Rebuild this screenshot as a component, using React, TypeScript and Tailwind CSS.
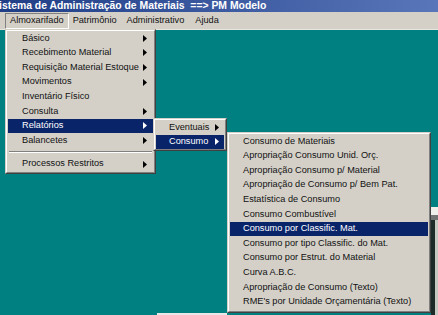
import React from "react";

const FONT = { fontFamily: '"Liberation Sans", Arial, sans-serif' };

function Arrow({ white }: { white?: boolean }) {
  return (
    <svg width="4" height="7" viewBox="0 0 4 7" className="shrink-0">
      <path d="M0 0 L4 3.5 L0 7 Z" fill={white ? "#ffffff" : "#000000"} />
    </svg>
  );
}

type Item = { label: string; sub?: boolean; active?: boolean; sep?: boolean };

function Menu({
  items,
  className,
  textPad,
  arrowPad,
}: {
  items: Item[];
  className: string;
  textPad: string;
  arrowPad: string;
}) {
  return (
    <div
      className={
        "absolute border border-t-[#d4d0c8] border-l-[#d4d0c8] border-b-[#404040] border-r-[#404040] bg-[#d4d0c8] " +
        className
      }
    >
      <div className="border border-t-white border-l-white border-b-[#808080] border-r-[#808080] px-[1px] py-0 h-full flex flex-col">
        {items.map((it, i) =>
          it.sep ? (
            <div key={i} className="h-[9px] flex flex-col justify-center px-[1px]">
              <div className="h-[1px] bg-[#808080]" />
              <div className="h-[1px] bg-white" />
            </div>
          ) : (
            <div
              key={i}
              className={
                "h-[14.6px] flex items-center text-[9.2px] leading-none " +
                (it.active ? "bg-[#0a246a] text-white" : "text-[#111111]")
              }
            >
              <span className={"flex-1 whitespace-nowrap " + textPad}>{it.label}</span>
              {it.sub && (
                <span className={arrowPad + " flex items-center"}>
                  <Arrow white={it.active} />
                </span>
              )}
            </div>
          )
        )}
      </div>
    </div>
  );
}

export default function App() {
  return (
    <div className="relative w-[438px] h-[315px] overflow-hidden flex flex-col bg-[#008080]" style={FONT}>
      {/* Title bar */}
      <div className="h-[12px] shrink-0 flex items-center bg-gradient-to-r from-[#1f3e86] to-[#5a76ba] text-white font-bold text-[10.4px] leading-none whitespace-nowrap">
        <span className="-ml-[1px]">istema de Administração de Materiais&nbsp;&nbsp;==&gt; PM Modelo</span>
      </div>
      {/* Menu bar */}
      <div className="h-[18px] shrink-0 flex items-stretch bg-[#d4d0c8] border-b border-b-[#e8e6e0] pl-[5px] pt-[1px] text-[9.2px] leading-none text-[#111111]">
        <div className="flex items-center px-[4px] border border-t-[#808080] border-l-[#808080] border-b-white border-r-white">
          Almoxarifado
        </div>
        <div className="flex items-center px-[4px]">Patrimônio</div>
        <div className="flex items-center pl-[6px] pr-[6px]">Administrativo</div>
        <div className="flex items-center px-[5px]">Ajuda</div>
      </div>
      {/* Desktop */}
      <div className="flex-1 bg-[#008080]" />

      {/* Background window fragments */}
      <div className="absolute left-[431px] top-[207px] w-[7px] h-[108px] bg-[#1a2a26] flex flex-col">
        <div className="h-[8px] bg-[#eef0ec]" />
        <div className="h-[5px] bg-[#707472]" />
        <div className="flex-1 flex">
          <div className="w-[4px] bg-[#1c2b28]" />
          <div className="flex-1 bg-[#c4c8c0]" />
        </div>
      </div>
      <div className="absolute left-[157px] top-[313px] w-[70px] h-[2px] bg-[#e8e8e8]" />

      {/* Menu 1 */}
      <Menu
        className="left-[5px] top-[29px] w-[151px] h-[145px]"
        textPad="pl-[14px]"
        arrowPad="pr-[6px]"
        items={[
          { label: "Básico", sub: true },
          { label: "Recebimento Material", sub: true },
          { label: "Requisição Material Estoque", sub: true },
          { label: "Movimentos", sub: true },
          { label: "Inventário Físico" },
          { label: "Consulta", sub: true },
          { label: "Relatórios", sub: true, active: true },
          { label: "Balancetes", sub: true },
          { sep: true, label: "" },
          { label: "Processos Restritos", sub: true },
        ]}
      />
      {/* Menu 2 */}
      <Menu
        className="left-[153px] top-[118px] w-[74px] h-[33px]"
        textPad="pl-[13px]"
        arrowPad="pr-[5px]"
        items={[
          { label: "Eventuais", sub: true },
          { label: "Consumo", sub: true, active: true },
        ]}
      />
      {/* Menu 3 */}
      <Menu
        className="left-[227px] top-[132px] w-[204px] h-[181px]"
        textPad="pl-[13px]"
        arrowPad="pr-[5px]"
        items={[
          { label: "Consumo de Materiais" },
          { label: "Apropriação Consumo Unid. Orç." },
          { label: "Apropriação Consumo p/ Material" },
          { label: "Apropriação de Consumo p/ Bem Pat." },
          { label: "Estatística de Consumo" },
          { label: "Consumo Combustível" },
          { label: "Consumo por Classific. Mat.", active: true },
          { label: "Consumo por tipo Classific. do Mat." },
          { label: "Consumo por Estrut. do Material" },
          { label: "Curva A.B.C." },
          { label: "Apropriação de Consumo (Texto)" },
          { label: "RME's por Unidade Orçamentária (Texto)" },
        ]}
      />
    </div>
  );
}
